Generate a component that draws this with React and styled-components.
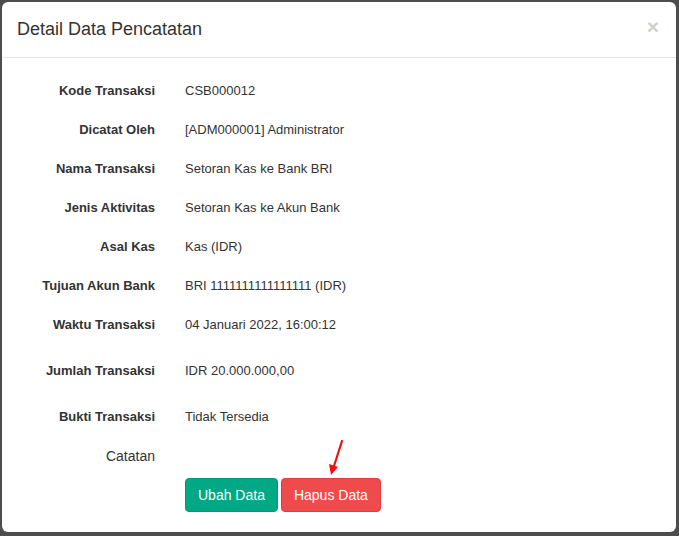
import React from "react";
import styled, { createGlobalStyle } from "styled-components";

const GlobalStyle = createGlobalStyle`
  html, body {
    margin: 0;
    padding: 0;
    background: #4d4d4d;
    font-family: "Liberation Sans", Arial, sans-serif;
  }
`;

const Backdrop = styled.div`
  width: 679px;
  height: 536px;
  padding: 2px 3px 4px 2px;
  box-sizing: border-box;
  background: #4d4d4d;
`;

const Modal = styled.div`
  position: relative;
  height: 100%;
  background: #ffffff;
  border-radius: 6px;
  overflow: hidden;
  color: #333333;
`;

const Header = styled.div`
  display: flex;
  align-items: center;
  justify-content: space-between;
  height: 56px;
  padding: 0 17px 0 15px;
  border-bottom: 1px solid #e5e5e5;
  box-sizing: border-box;
`;

const Title = styled.h4`
  margin: 0;
  font-size: 18px;
  font-weight: 400;
  color: #333;
`;

const Close = styled.span`
  font-size: 21px;
  font-weight: 700;
  color: #d0d0d0;
  line-height: 1;
  margin-top: -6px;
`;

const Body = styled.div`
  padding: 13px 0 0 0;
  display: grid;
  grid-template-columns: 153px 1fr;
  column-gap: 30px;
  font-size: 13px;
`;

const Label = styled.div`
  height: ${(p) => p.h || 39}px;
  display: flex;
  align-items: center;
  justify-content: flex-end;
  font-weight: ${(p) => (p.plain ? 400 : 700)};
  font-size: ${(p) => (p.plain ? "14px" : "inherit")};
`;

const Value = styled.div`
  height: ${(p) => p.h || 39}px;
  display: flex;
  align-items: center;
`;

const Actions = styled.div`
  grid-column: 2;
  display: flex;
  gap: 3px;
  padding-top: 3px;
`;

const Button = styled.button`
  font-family: inherit;
  font-size: 14px;
  color: #fff;
  background: ${(p) => (p.danger ? "#ef4b4c" : "#00a886")};
  border: 1px solid ${(p) => (p.danger ? "#e23b3c" : "#009878")};
  border-radius: 4px;
  height: 34px;
  padding: 0 12px;
`;

const Arrow = styled.svg`
  position: absolute;
  left: 320px;
  top: 436px;
`;

const rows = [
  ["Kode Transaksi", "CSB000012"],
  ["Dicatat Oleh", "[ADM000001] Administrator"],
  ["Nama Transaksi", "Setoran Kas ke Bank BRI"],
  ["Jenis Aktivitas", "Setoran Kas ke Akun Bank"],
  ["Asal Kas", "Kas (IDR)"],
  ["Tujuan Akun Bank", "BRI 1111111111111111 (IDR)"],
  ["Waktu Transaksi", "04 Januari 2022, 16:00:12"],
  ["Jumlah Transaksi", "IDR 20.000.000,00", 53],
  ["Bukti Transaksi", "Tidak Tersedia"],
];

const App = () => (
  <Backdrop>
    <GlobalStyle />
    <Modal>
      <Header>
        <Title>Detail Data Pencatatan</Title>
        <Close>×</Close>
      </Header>
      <Body>
        {rows.map(([label, value, h]) => (
          <React.Fragment key={label}>
            <Label h={h}>{label}</Label>
            <Value h={h}>{value}</Value>
          </React.Fragment>
        ))}
        <Label plain>Catatan</Label>
        <Value />
        <Actions>
          <Button>Ubah Data</Button>
          <Button danger>Hapus Data</Button>
        </Actions>
      </Body>
      <Arrow width="30" height="42" viewBox="0 0 30 42">
        <line x1="20" y1="3" x2="12" y2="28" stroke="#ee1111" strokeWidth="2.2" strokeLinecap="round" />
        <polygon points="7,26 16,29 9,37" fill="#ee1111" />
      </Arrow>
    </Modal>
  </Backdrop>
);

export default App;
